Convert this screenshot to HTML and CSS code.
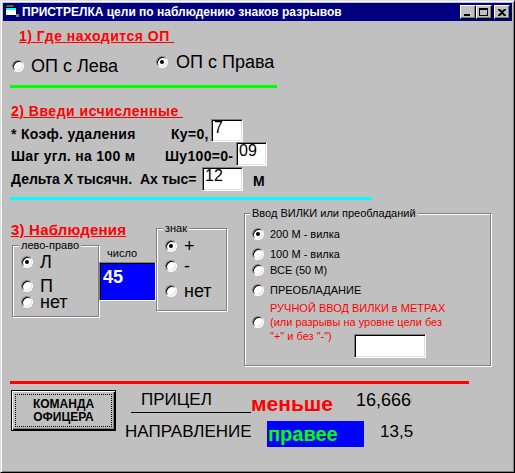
FILE: index.html
```html
<!DOCTYPE html>
<html lang="ru">
<head>
    <meta charset="UTF-8">
    <title>ПРИСТРЕЛКА цели по наблюдению знаков разрывов</title>
    <link rel="stylesheet" href="styles.css">
</head>
<body>
    <div class="window">
        <div class="titlebar">
            <svg class="app-icon" width="16" height="16" viewBox="0 0 16 16">
                <path d="M1 3 L3 1 L10 1 L10 3 Z" fill="#c0c0c0" stroke="#000" stroke-width="1"/>
                <rect x="1.5" y="3.5" width="11" height="8" fill="#fff" stroke="#000"/>
                <rect x="2" y="4" width="10" height="2" fill="#00ffff"/>
                <rect x="12" y="10" width="3" height="3" fill="#808080"/>
            </svg>
            <span class="title">ПРИСТРЕЛКА цели по наблюдению знаков разрывов</span>
            <div class="caption-buttons">
                <span class="cap-btn"><span class="min-glyph"></span></span>
                <span class="cap-btn"><span class="max-glyph"></span></span>
                <span class="cap-btn close">
                    <svg width="8" height="7" viewBox="0 0 8 7">
                        <path d="M0 0h2l2 2 2-2h2v1L5 3.5 8 6v1H6L4 5 2 7H0V6l3-2.5L0 1z" fill="#000"/>
                    </svg>
                </span>
            </div>
        </div>

        <div class="client">
            <!-- 1) position of the firing point -->
            <div class="heading h-op">1) Где находится ОП&nbsp;</div>
            <div class="op-row">
                <div class="opt op-left"><span class="radio"></span><span class="big">ОП с Лева</span></div>
                <div class="opt op-right"><span class="radio checked"></span><span class="big">ОП с Права</span></div>
            </div>
            <div class="rule green"></div>

            <!-- 2) computed values -->
            <div class="heading h-calc">2) Введи исчисленные&nbsp;</div>
            <div class="calc-row row-ky">
                <span class="calc-label w-ky">* Коэф. удаления</span>
                <span class="calc-label w-ky-eq">Ку=0,</span>
                <div class="edit e-ky">7</div>
            </div>
            <div class="calc-row row-sh">
                <span class="calc-label w-sh">Шаг угл. на 100 м</span>
                <span class="calc-label w-sh-eq">Шу100=0-</span>
                <div class="edit e-sh">09</div>
            </div>
            <div class="calc-row row-dx">
                <span class="calc-label w-dx">Дельта Х тысячн.&nbsp; Ах тыс=</span>
                <div class="edit e-dx">12</div>
                <span class="calc-label unit">М</span>
            </div>
            <div class="rule cyan"></div>

            <!-- 3) observations -->
            <div class="obs">
                <div class="obs-left">
                    <div class="heading h-obs">3) Наблюдения</div>
                    <fieldset class="group g-side">
                        <legend>лево-право</legend>
                        <div class="opt side-l"><span class="radio checked"></span><span class="big">Л</span></div>
                        <div class="opt side-p"><span class="radio"></span><span class="big">П</span></div>
                        <div class="opt side-n"><span class="radio"></span><span class="big">нет</span></div>
                    </fieldset>
                </div>
                <div class="obs-number">
                    <div class="small-label">число</div>
                    <div class="number-box">45</div>
                </div>
                <fieldset class="group g-sign">
                    <legend>знак</legend>
                    <div class="opt sign-plus"><span class="radio checked"></span><span class="big">+</span></div>
                    <div class="opt sign-minus"><span class="radio"></span><span class="big">-</span></div>
                    <div class="opt sign-none"><span class="radio"></span><span class="big">нет</span></div>
                </fieldset>
                <fieldset class="group g-fork">
                    <legend>Ввод ВИЛКИ или преобладаний</legend>
                    <div class="opt fork-200"><span class="radio checked"></span><span>200 М - вилка</span></div>
                    <div class="opt fork-100"><span class="radio"></span><span>100 М - вилка</span></div>
                    <div class="opt fork-all"><span class="radio"></span><span>ВСЕ (50 М)</span></div>
                    <div class="opt fork-pre"><span class="radio"></span><span>ПРЕОБЛАДАНИЕ</span></div>
                    <div class="opt fork-manual"><span class="radio"></span><span class="manual-text">РУЧНОЙ ВВОД ВИЛКИ в МЕТРАХ<br>(или разрывы на уровне цели без<br>"+" и без "-")</span></div>
                    <div class="edit e-fork"></div>
                </fieldset>
            </div>
            <div class="rule red"></div>

            <!-- officer's command -->
            <div class="command">
                <div class="btn-default"><div class="focus">КОМАНДА<br>ОФИЦЕРА</div></div>
                <div class="readout">
                    <div class="readout-row r-sight">
                        <span class="sight-label">ПРИЦЕЛ</span>
                        <span class="less">меньше</span>
                        <span class="value v-sight">16,666666</span>
                    </div>
                    <div class="readout-row r-dir">
                        <span class="dir-label">НАПРАВЛЕНИЕ</span>
                        <span class="right-box">правее</span>
                        <span class="value v-dir">13,5</span>
                    </div>
                </div>
            </div>
        </div>
    </div>
</body>
</html>
```

FILE: styles.css
```css
* {
    box-sizing: border-box;
}

body {
    margin: 0;
    background: #c0c0c0;
    font-family: "Liberation Sans", Arial, sans-serif;
    color: #000;
}

.window {
    width: 515px;
    height: 473px;
    padding: 2px;
    background: #c0c0c0;
    border: 1px solid;
    border-color: #dfdfdf #000 #000 #dfdfdf;
    box-shadow: inset 1px 1px #fff, inset -1px -1px #808080;
    overflow: hidden;
}

/* Title bar */
.titlebar {
    height: 18px;
    background: #000080;
    display: flex;
    align-items: center;
    padding: 0 2px 0 1px;
}

.app-icon {
    flex-shrink: 0;
    margin-right: 2px;
}

.title {
    color: #fff;
    font-weight: bold;
    font-size: 12px;
    line-height: 18px;
    white-space: nowrap;
}

.caption-buttons {
    margin-left: auto;
    display: flex;
}

.cap-btn {
    width: 16px;
    height: 14px;
    background: #c0c0c0;
    border: 1px solid;
    border-color: #fff #000 #000 #fff;
    box-shadow: inset -1px -1px #808080;
    display: flex;
    align-items: center;
    justify-content: center;
}

.cap-btn.close {
    margin-left: 2px;
}

.min-glyph {
    width: 6px;
    height: 2px;
    background: #000;
    margin-top: 6px;
    margin-left: -2px;
}

.max-glyph {
    width: 9px;
    height: 8px;
    border: 1px solid #000;
    border-top-width: 2px;
    margin-left: -1px;
}

/* Client area */
.heading {
    color: #ff0000;
    font-weight: bold;
    font-size: 14px;
    line-height: 15px;
    letter-spacing: 0.5px;
    text-decoration: underline;
    white-space: nowrap;
}

.h-op {
    margin: 8px 0 0 16px;
}

.h-calc {
    margin: 16px 0 0 8px;
}

.h-obs {
    font-size: 15px;
    line-height: 16px;
    letter-spacing: 0.2px;
    margin-top: 22px;
}

.opt {
    display: flex;
    align-items: center;
}

.radio {
    position: relative;
    flex-shrink: 0;
    width: 12px;
    height: 12px;
    border-radius: 50%;
    background: #fff;
    border: 1px solid;
    border-color: #808080 #fff #fff #808080;
    box-shadow: inset 1px 1px #000, inset -1px -1px #dfdfdf;
}

.radio.checked::after {
    content: "";
    position: absolute;
    left: 3px;
    top: 3px;
    width: 4px;
    height: 4px;
    border-radius: 50%;
    background: #000;
}

.big {
    font-size: 18px;
    line-height: 20px;
}

.op-row {
    display: flex;
    align-items: flex-start;
    margin-top: 8px;
}

.op-left {
    width: 144px;
    margin: 4px 0 0 9px;
}

.op-left .radio {
    margin-right: 7px;
}

.op-right .radio {
    margin-right: 8px;
}

.rule {
    height: 3px;
    margin-left: 7px;
}

.rule.green {
    width: 267px;
    margin-top: 9px;
    background: #00ff00;
}

.rule.cyan {
    width: 362px;
    margin-top: 6px;
    background: #00ffff;
}

.rule.red {
    width: 459px;
    margin-top: 15px;
    background: #ff0000;
}

/* Computed values */
.calc-row {
    display: flex;
    align-items: flex-start;
    margin-left: 8px;
}

.calc-label {
    font-weight: bold;
    font-size: 14px;
    line-height: 15px;
    letter-spacing: 0.3px;
    white-space: nowrap;
}

.row-ky .calc-label { margin-top: 8px; }
.row-sh .calc-label { margin-top: 7px; }
.row-dx { margin-top: 1px; }
.row-dx .calc-label { margin-top: 5px; }

.w-ky { width: 160px; }
.w-ky-eq { width: 40px; }
.w-sh { width: 154px; }
.w-sh-eq { width: 71px; }

.w-dx {
    width: 191px;
    letter-spacing: 0;
}

.row-dx .unit {
    margin: 7px 0 0 10px;
}

.edit {
    background: #fff;
    border: 1px solid;
    border-color: #808080 #fff #fff #808080;
    box-shadow: inset 1px 1px #000, inset -1px -1px #dfdfdf;
    font-size: 16px;
    line-height: 16px;
    padding: 0 2px;
}

.e-ky { width: 32px; height: 23px; }
.e-sh { width: 31px; height: 24px; }
.e-dx { width: 41px; height: 24px; }

/* Observations */
.obs {
    display: flex;
    align-items: flex-start;
}

.obs-left {
    width: 88px;
    margin-left: 8px;
}

.group {
    margin: 0;
    padding: 0;
    border: 1px solid #808080;
    box-shadow: inset 1px 1px #fff, 1px 1px #fff;
    min-width: 0;
}

.group legend {
    font-size: 11px;
    line-height: 13px;
    padding: 0 2px;
    margin-left: -2px;
    background: #c0c0c0;
}

.group .radio {
    margin-right: 7px;
}

.group .big {
    line-height: 16px;
}

.g-side {
    width: 87px;
    margin: 1px 0 0 1px;
    padding: 0 0 6px 8px;
}

.g-side .opt {
    height: 16px;
}

.side-l { margin-top: 2px; }
.side-p { margin-top: 8px; }

.obs-number {
    width: 57px;
    margin-top: 47px;
}

.small-label {
    font-size: 11px;
    line-height: 13px;
    padding-left: 8px;
}

.number-box {
    margin-top: 2px;
    height: 39px;
    background: #0000ff;
    color: #fff;
    font-weight: bold;
    font-size: 18px;
    line-height: 20px;
    padding: 4px 0 0 3px;
    border: 1px solid;
    border-color: #808080 #fff #fff #808080;
    box-shadow: inset 1px 1px #000;
}

.g-sign {
    width: 71px;
    margin-top: 22px;
    padding: 0 0 11px 8px;
}

.g-sign .opt {
    height: 16px;
}

.sign-plus { margin-top: 3px; }
.sign-minus { margin-top: 4px; }
.sign-none { margin-top: 9px; }

.g-fork {
    width: 247px;
    margin: 7px 0 0 17px;
    padding: 0 0 7px 7px;
    font-size: 11px;
    line-height: 14px;
}

.g-fork .radio {
    margin-right: 6px;
}

.fork-200 { margin-top: 7px; }
.fork-100 { margin-top: 6px; }
.fork-all { margin-top: 2px; }
.fork-pre { margin-top: 6px; }
.fork-manual { margin-top: 4px; }

.manual-text {
    color: #ff0000;
}

.e-fork {
    width: 72px;
    height: 24px;
    margin: -9px 0 0 102px;
}

/* Officer's command */
.command {
    display: flex;
    align-items: flex-start;
    margin-top: 6px;
}

.btn-default {
    width: 105px;
    height: 41px;
    margin-left: 8px;
    padding: 3px;
    border: 1px solid #000;
    box-shadow: inset 1px 1px #fff, inset -1px -1px #000, inset -2px -2px #808080;
}

.focus {
    height: 100%;
    border: 1px dotted #000;
    display: flex;
    align-items: center;
    justify-content: center;
    text-align: center;
    font-weight: bold;
    font-size: 12px;
    line-height: 13px;
}

.readout-row {
    display: flex;
    align-items: flex-start;
    white-space: nowrap;
}

.r-sight {
    height: 23px;
}

.sight-label {
    width: 120px;
    height: 23px;
    margin-left: 15px;
    padding-left: 10px;
    border-bottom: 1px solid #000;
    font-size: 17px;
    line-height: 20px;
}

.less {
    width: 105px;
    margin-top: 2px;
    color: #ff0000;
    font-weight: bold;
    font-size: 21px;
    line-height: 24px;
}

.value {
    font-size: 17px;
    line-height: 20px;
    overflow: hidden;
}

.v-sight {
    width: 56px;
    font-size: 18px;
}

.r-dir {
    margin-top: 8px;
}

.dir-label {
    width: 142px;
    margin: 1px 0 0 9px;
    font-size: 17px;
    line-height: 20px;
}

.right-box {
    width: 97px;
    height: 26px;
    padding-left: 1px;
    background: #0000ff;
    color: #00ff00;
    font-weight: bold;
    font-size: 20px;
    line-height: 26px;
}

.v-dir {
    margin: 1px 0 0 16px;
}
```
